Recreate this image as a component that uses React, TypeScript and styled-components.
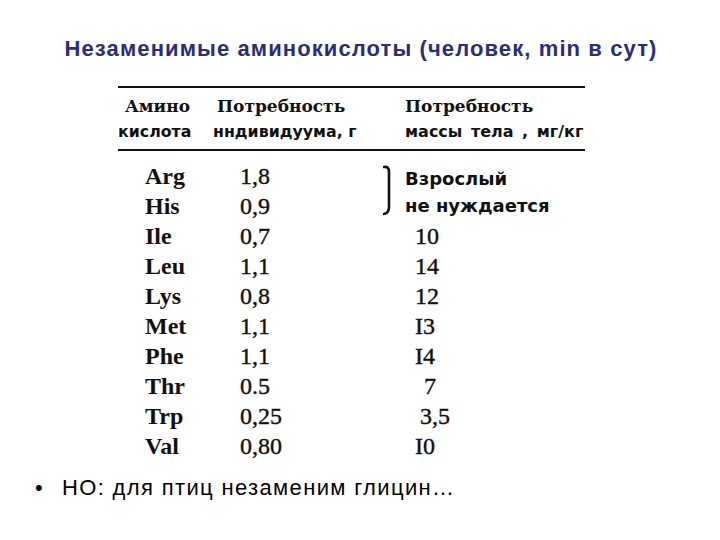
import React from "react";
import styled, { createGlobalStyle } from "styled-components";

const Global = createGlobalStyle`
  html, body { margin: 0; padding: 0; background: #fff; }
  body { width: 720px; height: 540px; overflow: hidden; }
`;

const Page = styled.div`
  width: 720px;
  height: 540px;
  display: flex;
  flex-direction: column;
  background: #fff;
`;

const Title = styled.h1`
  margin: 0;
  padding: 36px 0 0 2px;
  text-align: center;
  font-family: "Liberation Sans", Arial, sans-serif;
  font-weight: bold;
  font-size: 22px;
  letter-spacing: 1.1px;
  line-height: 26px;
  color: #2a2c7c;
`;

const Table = styled.div`
  margin-left: 118px;
  margin-top: 24px;
  width: 467px;
  color: #111;
`;

const Head = styled.div`
  border-top: 2px solid #111;
  border-bottom: 2px solid #111;
  padding: 6px 0 4px;
  display: grid;
  grid-template-columns: 95px 192px 1fr;
  overflow: hidden;
`;

const HeadTop = styled.div<{ $indent: number }>`
  font-family: "DejaVu Serif", "Liberation Serif", serif;
  font-weight: bold;
  font-size: 17px;
  line-height: 24px;
  padding-left: ${(p) => p.$indent}px;
  white-space: nowrap;
`;

const HeadBottom = styled.div<{ $indent: number; $wide?: boolean }>`
  font-family: "DejaVu Sans", "Liberation Sans", sans-serif;
  font-weight: bold;
  font-size: ${(p) => (p.$wide ? 16 : 15.8)}px;
  word-spacing: ${(p) => (p.$wide ? 3 : 0)}px;
  line-height: 27px;
  padding-left: ${(p) => p.$indent}px;
  white-space: nowrap;
  overflow: hidden;
`;

const Body = styled.div`
  padding: 10px 0 0 27px;
  display: grid;
  grid-template-columns: 95px 143px 1fr;
  grid-auto-rows: 30px;
`;

const Name = styled.div`
  font-family: "Liberation Serif", "Times New Roman", serif;
  font-weight: bold;
  font-size: 24px;
  line-height: 30px;
`;

const Value = styled.div<{ $indent?: number }>`
  font-family: "Liberation Serif", "Times New Roman", serif;
  font-size: 24px;
  line-height: 30px;
  padding-left: ${(p) => p.$indent ?? 0}px;
  -webkit-text-stroke: 0.4px #111;
`;

const Note = styled.div`
  grid-row: span 2;
  display: flex;
  align-items: flex-start;
  gap: 12px;
  padding-top: 4px;
`;

const NoteText = styled.div`
  font-family: "DejaVu Sans", "Liberation Sans", sans-serif;
  font-weight: bold;
  font-size: 18px;
  line-height: 27px;
  white-space: nowrap;
`;

const Bullet = styled.ul`
  margin: 14px 0 0;
  padding: 0 0 0 35px;
  list-style: none;
`;

const BulletItem = styled.li`
  display: flex;
  gap: 15px;
  font-family: "Liberation Sans", Arial, sans-serif;
  font-size: 22px;
  letter-spacing: 1.35px;
  line-height: 26px;
  color: #000;
  &::before {
    content: "•";
    width: 12px;
  }
`;

const rows: [string, string, string | null, number][] = [
  ["Arg", "1,8", null, 0],
  ["His", "0,9", null, 0],
  ["Ile", "0,7", "10", 32],
  ["Leu", "1,1", "14", 32],
  ["Lys", "0,8", "12", 32],
  ["Met", "1,1", "I3", 32],
  ["Phe", "1,1", "I4", 32],
  ["Thr", "0.5", "7", 41],
  ["Trp", "0,25", "3,5", 37],
  ["Val", "0,80", "I0", 32],
];

const Brace = () => (
  <svg width="10" height="50" viewBox="0 0 10 50" style={{ flexShrink: 0 }}>
    <path
      d="M1 2 Q6 1 6 7 L6 42 Q6 48 1 49"
      fill="none"
      stroke="#111"
      strokeWidth="2.6"
      strokeLinecap="round"
    />
  </svg>
);

export default function App() {
  return (
    <Page>
      <Global />
      <Title>Незаменимые аминокислоты (человек, min в сут)</Title>
      <Table>
        <Head>
          <HeadTop $indent={7}>Амино</HeadTop>
          <HeadTop $indent={4}>Потребность</HeadTop>
          <HeadTop $indent={0}>Потребность</HeadTop>
          <HeadBottom $indent={0}>кислота</HeadBottom>
          <HeadBottom $indent={0}>нндивидуума, г</HeadBottom>
          <HeadBottom $indent={0} $wide>
            массы тела , мг/кг
          </HeadBottom>
        </Head>
        <Body>
          {rows.map(([n, v, w, ind], i) => (
            <React.Fragment key={n}>
              <Name>{n}</Name>
              <Value>{v}</Value>
              {i === 0 && (
                <Note>
                  <Brace />
                  <NoteText>
                    Взрослый
                    <br />
                    не нуждается
                  </NoteText>
                </Note>
              )}
              {w !== null && <Value $indent={ind}>{w}</Value>}
            </React.Fragment>
          ))}
        </Body>
      </Table>
      <Bullet>
        <BulletItem>НО: для птиц незаменим глицин…</BulletItem>
      </Bullet>
    </Page>
  );
}
